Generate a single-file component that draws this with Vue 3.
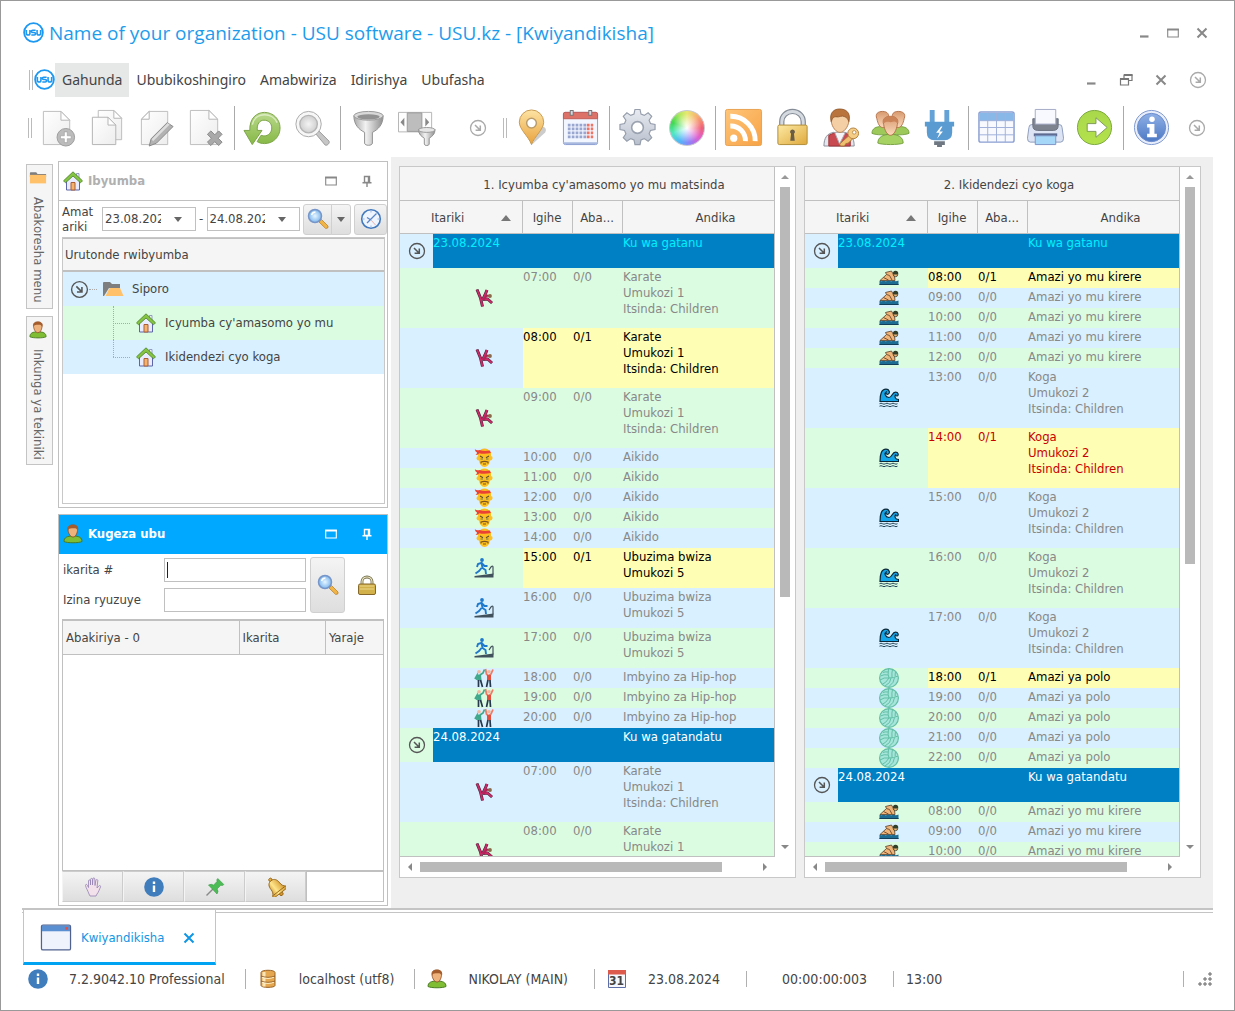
<template>
  <div class="window">
    <!-- shared icon shapes -->
    <svg class="sprite" aria-hidden="true">
      <defs>
        <linearGradient id="gPaper" x1="0" y1="0" x2="1" y2="1">
          <stop offset="0" stop-color="#ffffff" />
          <stop offset="1" stop-color="#ededed" />
        </linearGradient>
        <linearGradient id="gMetal" x1="0" y1="0" x2="1" y2="0">
          <stop offset="0" stop-color="#a8a8a8" />
          <stop offset="0.4" stop-color="#f2f2f2" />
          <stop offset="1" stop-color="#8e8e8e" />
        </linearGradient>
        <linearGradient id="gGreen" x1="0" y1="0" x2="0" y2="1">
          <stop offset="0" stop-color="#b9d98c" />
          <stop offset="1" stop-color="#86b845" />
        </linearGradient>
        <linearGradient id="gLime" x1="0" y1="0" x2="0" y2="1">
          <stop offset="0" stop-color="#a9d84c" />
          <stop offset="1" stop-color="#b4e24c" />
        </linearGradient>
        <linearGradient id="gPin" x1="0" y1="0" x2="0" y2="1">
          <stop offset="0" stop-color="#fde3a4" />
          <stop offset="1" stop-color="#e9a23c" />
        </linearGradient>
        <linearGradient id="gGold" x1="0" y1="0" x2="1" y2="1">
          <stop offset="0" stop-color="#fdeaa4" />
          <stop offset="1" stop-color="#dfa93c" />
        </linearGradient>
        <linearGradient id="gSteel" x1="0" y1="0" x2="0" y2="1">
          <stop offset="0" stop-color="#e8ebf1" />
          <stop offset="1" stop-color="#b9c0cd" />
        </linearGradient>
        <linearGradient id="gOrange" x1="0" y1="0" x2="1" y2="1">
          <stop offset="0" stop-color="#ffc57a" />
          <stop offset="1" stop-color="#f7a244" />
        </linearGradient>
        <linearGradient id="gBlue" x1="0" y1="0" x2="0" y2="1">
          <stop offset="0" stop-color="#8fb0e6" />
          <stop offset="1" stop-color="#4d79c4" />
        </linearGradient>
        <linearGradient id="gHead" x1="0" y1="0" x2="0" y2="1">
          <stop offset="0" stop-color="#d89a6e" />
          <stop offset="1" stop-color="#fbd9bb" />
        </linearGradient>
        <linearGradient id="gBell" x1="0" y1="0" x2="1" y2="0">
          <stop offset="0" stop-color="#c98a1e" />
          <stop offset="0.4" stop-color="#ffe68c" />
          <stop offset="1" stop-color="#d08f22" />
        </linearGradient>
        <radialGradient id="gLens">
          <stop offset="0" stop-color="#f4f4f4" />
          <stop offset="1" stop-color="#cfcfcf" />
        </radialGradient>
        <radialGradient id="gLensBlue">
          <stop offset="0" stop-color="#e6f5ff" />
          <stop offset="1" stop-color="#7db8ee" />
        </radialGradient>
      </defs>

      <symbol id="usu" viewBox="0 0 20 20">
        <circle cx="10" cy="10" r="8.9" fill="#fff" stroke="#1c98f3" stroke-width="1.8" />
        <path d="M3.2 7.600v3q0 1.800 1.700 1.800t1.700-1.800v-3M12 7.800H9.200q-1.200 0-1.200 1.100t1.200 1.100h1.500q1.200 0 1.200 1.200t-1.200 1.200H7.900M13.400 7.600v3q0 1.800 1.700 1.800t1.700-1.800v-3" fill="none" stroke="#1c98f3" stroke-width="1.5" />
      </symbol>
      <symbol id="more" viewBox="0 0 18 18">
        <circle cx="9" cy="9" r="7.5" fill="none" stroke="currentColor" stroke-width="1.3" />
        <path d="M6 6l5 5M11.300 6.600v4.700H6.600" fill="none" stroke="currentColor" stroke-width="1.5" />
      </symbol>
      <symbol id="minimize" viewBox="0 0 14 14"><path d="M3 10.500h8.500" stroke="#888" stroke-width="2.2" /></symbol>
      <symbol id="maximize" viewBox="0 0 14 14">
        <path d="M1.700 3.500h10.600v7.500H1.700z" fill="none" stroke="currentColor" stroke-width="1.100" />
        <path d="M1.100 3.500h11.800" stroke="currentColor" stroke-width="2" />
      </symbol>
      <symbol id="restore" viewBox="0 0 14 14">
        <path d="M5 5V2h8v5.500H9.500M1.500 6h8v6h-8z" fill="none" stroke="#777" stroke-width="1.200" />
        <path d="M5 2h8.500M1 6h9" stroke="#777" stroke-width="2" />
      </symbol>
      <symbol id="close" viewBox="0 0 14 14"><path d="M2.500 2.500l9 9M11.500 2.500l-9 9" stroke="currentColor" stroke-width="2" /></symbol>
      <symbol id="pin" viewBox="0 0 14 14"><path d="M4.500 2.500h5v6h-5zM2.500 8.700h9M7 9v4M8.500 2.500v6" fill="none" stroke="currentColor" stroke-width="1.400" /></symbol>

      <symbol id="docNew" viewBox="0 0 40 40">
        <path d="M4.500 3.500h18l9 9v25h-27z" fill="url(#gPaper)" stroke="#bdbdbd" />
        <path d="M22.500 3.500v9h9z" fill="#fff" stroke="#b5b5b5" />
        <circle cx="27.500" cy="30" r="9" fill="#bcbcbc" stroke="#9d9d9d" />
        <path d="M26 24.500h3v4h4v3h-4v4h-3v-4h-4v-3h4z" fill="#fff" stroke="#999" stroke-width=".6" />
      </symbol>
      <symbol id="docCopy" viewBox="0 0 40 40">
        <path d="M10.500 2.500h16l8 8v22h-24z" fill="url(#gPaper)" stroke="#bdbdbd" />
        <path d="M26.500 2.500v8h8z" fill="#fff" stroke="#b5b5b5" />
        <path d="M4.500 9.500h16l8 8v20h-24z" fill="url(#gPaper)" stroke="#b3b3b3" />
        <path d="M20.500 9.500v8h8z" fill="#fff" stroke="#b5b5b5" />
      </symbol>
      <symbol id="docEdit" viewBox="0 0 40 40">
        <path d="M12.500 3.500h19v34h-27v-26z" fill="url(#gPaper)" stroke="#bdbdbd" />
        <path d="M12.500 3.500v8h-8z" fill="#fff" stroke="#b0b0b0" />
        <path d="M31 15l6 4-17 17-7.500 3 2-7.500z" fill="#b2b2b2" stroke="#888" />
        <path d="M15 32L31.500 15.500l2 1.500-17 17z" fill="#ddd" />
      </symbol>
      <symbol id="docDelete" viewBox="0 0 40 40">
        <path d="M4.500 2.500h19l9 9v26h-28z" fill="url(#gPaper)" stroke="#bdbdbd" />
        <path d="M23.500 2.500v9h9z" fill="#fff" stroke="#b5b5b5" />
        <path d="M22 27l3.500-3.500 4 4 4-4 3.500 3.500-4 4 4 4-3.500 3.500-4-4-4 4-3.500-3.500 4-4z" fill="#a9a9a9" stroke="#888" />
      </symbol>
      <symbol id="refresh" viewBox="0 0 40 40">
        <path d="M7 23C6.500 10 14.500 4.500 22 4.500c9 0 16 7 16 16s-7 16-16 16c-3 0-5.500-.8-7.500-2l4-6.500c6 2.400 11-2 11-7.500 0-5-3.500-8-8-8-4.500 0-7.500 4-6.800 10.500h4.800L9.500 37.500 1 23z" fill="url(#gGreen)" stroke="#7ba347" />
        <path d="M9.500 17c1.500-7 7-10 12.500-10 6 0 11 3.500 13 8" fill="none" stroke="#dcecc2" stroke-width="1.500" />
      </symbol>
      <symbol id="search" viewBox="0 0 40 40">
        <path d="M24 26l3-3 11 11c1 2-2 5-4 4z" fill="#c6c6c6" stroke="#999" />
        <circle cx="17" cy="16.500" r="13" fill="#f7f7f7" stroke="#aaa" />
        <circle cx="17" cy="16.500" r="9" fill="url(#gLens)" stroke="#b4b4b4" stroke-width="1.400" />
      </symbol>
      <symbol id="funnel" viewBox="0 0 40 40">
        <path d="M5 8c0 9 5 14 11 17v11c0 3 8 3 8 0V25c6-3 11-8 11-17z" fill="url(#gMetal)" stroke="#909090" />
        <ellipse cx="20" cy="8" rx="15" ry="4.500" fill="#d9d9d9" stroke="#999" />
        <ellipse cx="20" cy="9" rx="11.500" ry="2.700" fill="#929292" />
      </symbol>
      <symbol id="funnelBar" viewBox="0 0 40 40">
        <path d="M.5 4.500h34v20H.5z" fill="#fdfdfd" stroke="#b5b5b5" />
        <path d="M9.500 5h15v19h-15z" fill="#bdbdbd" stroke="#9a9a9a" />
        <path d="M6.500 10v9l-4-4.500zM28 10v9l4-4.500z" fill="#888" />
        <path d="M21 22c0 5 3 7 6 9v6c0 2 5 2 5 0v-6c3-2 6-4 6-9z" fill="url(#gMetal)" stroke="#909090" />
        <ellipse cx="29.500" cy="22.500" rx="8.500" ry="2.500" fill="#e6e6e6" stroke="#999" />
      </symbol>
      <symbol id="marker" viewBox="0 0 40 40">
        <path d="M20 38L34 25c2-3 0-6-4-6z" fill="#555" opacity="0.3" />
        <path d="M20 37.500C17 29 7.500 22 7.500 14.500a12.500 12.500 0 0 1 25 0C32.500 22 23 29 20 37.500z" fill="url(#gPin)" stroke="#c99a50" />
        <circle cx="20" cy="15.500" r="5" fill="#fff" stroke="#b99c6c" stroke-width="1.500" />
      </symbol>
      <symbol id="calendar" viewBox="0 0 40 40">
        <rect x="2.500" y="4.500" width="35" height="33" rx="2" fill="#f2f6ff" stroke="#889cd0" />
        <path d="M2.500 11V6q0-1.500 1.500-1.500h32q1.500 0 1.500 1.500v5z" fill="#dc7268" stroke="#c05c56" />
        <path d="M3 36h34" stroke="#a9b8de" stroke-width="2" />
        <path d="M7 17.500h19M7 21.500h19M7 25.500h19M7 29.500h19" stroke="#99a6cf" stroke-width="2.800" stroke-dasharray="2.800 1.200" />
        <path d="M26.500 17.500h6.500M26.500 21.500h6.500M26.500 25.500h6.500M26.500 29.500h6.500" stroke="#ef7464" stroke-width="2.800" stroke-dasharray="2.800 1.200" />
        <path d="M11 2v6M30 2v6" stroke="#777" stroke-width="4" />
        <path d="M11 3v4M30 3v4" stroke="#d8d8e0" stroke-width="2" />
      </symbol>
      <symbol id="gear" viewBox="0 0 40 40">
        <path d="M17.400 1.500h5.200l1 4.700 3.300 1.400 4-2.700 3.700 3.700-2.700 4 1.400 3.300 4.700 1v5.200l-4.700 1-1.400 3.300 2.700 4-3.700 3.700-4-2.700-3.300 1.400-1 4.700h-5.200l-1-4.700-3.300-1.400-4 2.700-3.700-3.700 2.700-4-1.400-3.300-4.700-1v-5.200l4.700-1 1.400-3.300-2.700-4 3.700-3.700 4 2.700 3.300-1.400z" fill="url(#gSteel)" stroke="#969eac" stroke-width="1.200" />
        <circle cx="20" cy="20" r="6" fill="#fff" stroke="#9aa2b0" stroke-width="1.600" />
      </symbol>
      <symbol id="rss" viewBox="0 0 40 40">
        <rect x="1.500" y="1.500" width="37" height="37" rx="2" fill="url(#gOrange)" stroke="#e8a050" />
        <circle cx="10" cy="31" r="3.700" fill="#fff" />
        <path d="M6.500 18.500A15 15 0 0 1 22 34M6.500 8.500A25 25 0 0 1 32 34" fill="none" stroke="#fff" stroke-width="5" />
      </symbol>
      <symbol id="lock" viewBox="0 0 40 40">
        <path d="M9 19v-5a11 10.500 0 0 1 22 0v5" fill="none" stroke="#858c96" stroke-width="5.500" />
        <path d="M9 19v-5a11 10.500 0 0 1 22 0v5" fill="none" stroke="#d5dae0" stroke-width="3" />
        <rect x="5" y="17.500" width="30" height="20" rx="1.500" fill="url(#gGold)" stroke="#b08c3a" />
        <path d="M20 22a2.500 2.500 0 0 1 1.500 4.500l.8 7h-4.600l.8-7A2.500 2.500 0 0 1 20 22z" fill="#6a5d46" />
      </symbol>
      <symbol id="userKey" viewBox="0 0 40 40">
        <path d="M2 39c0-8 3-13 10-14l6 5 5-5c7 1 10 6 10 14z" fill="#e4e7ee" stroke="#8a8f9a" />
        <path d="M7 39V28l7-3 4 6 5-6 6 4v10z" fill="#c94a50" stroke="#9e3438" />
        <path d="M13 25l5 12 6-12z" fill="#f5f5f8" stroke="#a9a9b0" />
        <path d="M9.500 14C8 5 13 1.500 18 1.500S29 4 27.500 14c-1 6-5 11-9 11s-8-5-9-11z" fill="#f4cfa5" stroke="#b88352" />
        <path d="M9.500 14C7 4 13 1 18 1c6 0 12 3 9.500 13-1-3-2-4-4-5-4-2-5 1-10 0-2 0-3 2-4 5z" fill="#b9733c" stroke="#8e5529" stroke-width=".8" />
        <path d="M28 28L18 37l1 2h4l1.500-2.500 2.500-.5 5-5" fill="#f0c070" stroke="#a9783a" />
        <circle cx="32" cy="26" r="5.500" fill="#f6cd84" stroke="#b0803e" />
        <circle cx="33" cy="25" r="1.800" fill="#fff" stroke="#b0803e" stroke-width=".8" />
      </symbol>
      <symbol id="users" viewBox="0 0 40 40">
        <g stroke-width=".9">
          <path d="M1 26c0-5 4-7 10-7s10 2 10 7c-4 2-16 2-20 0z" fill="#9cc95a" stroke="#6f9a38" />
          <path d="M19 26c0-5 4-7 10-7s10 2 10 7c-4 2-16 2-20 0z" fill="#9cc95a" stroke="#6f9a38" />
          <path d="M6 11c-2-5 1-7.500 6-7.500s7 3 6 8c-1 5-3 8.500-6 8.500s-5-4-6-9z" fill="url(#gHead)" stroke="#b06c42" />
          <path d="M22 11c-1-5 1-7.500 6-7.500s8 2.500 6 7.500c-1 5-3 9-6 9s-5-4-6-9z" fill="url(#gHead)" stroke="#b06c42" />
          <path d="M7 36c0-6 5-9 13-9s13 3 13 9c-4 2-22 2-26 0z" fill="#a5d263" stroke="#6f9a38" />
          <path d="M13 17c-2-6 2-8.500 7-8.500s9 2.500 7 8.500c-1 6-3.500 11-7 11s-6-5-7-11z" fill="url(#gHead)" stroke="#b06c42" />
          <path d="M13 16c-2-5 2-7.500 7-7.500s9 2.500 7 7.500c-2-3-4-2-7-1.500-3-.5-5-1-7 1.500z" fill="#cb8358" />
        </g>
      </symbol>
      <symbol id="plug" viewBox="0 0 40 40">
        <path d="M10 2h5v13h-5zM25 2h5v13h-5z" fill="#62a2d6" />
        <path d="M5 14h30v5h-2v6q0 8-8 8H15q-8 0-8-8v-6H5z" fill="#5a9bd2" />
        <path d="M21.500 19l-5 6.500h3.500l-2.500 6 6-7.500h-3.500l3-5z" fill="#fff" />
        <path d="M14.500 34h11v4h-3v2h-5v-2h-3z" fill="#6f7882" />
      </symbol>
      <symbol id="grid" viewBox="0 0 40 40">
        <rect x="2" y="4" width="36" height="31" rx="2" fill="#f7f9ff" stroke="#8a9fd2" stroke-width="1.500" />
        <path d="M2.500 5h35v8h-35z" fill="#88b8e8" />
        <path d="M2 13h36M2 20h36M2 27.500h36M11 5v30M20 5v30M29 5v30" stroke="#9fb0da" />
      </symbol>
      <symbol id="printer" viewBox="0 0 40 40">
        <path d="M3 20q0-3 3-3h28q3 0 3 3l1.500 11q0 4-3 4h-31q-3 0-3-4z" fill="#dde4f3" stroke="#8f9dbd" />
        <path d="M7 11h26v7q0 5-5 5H12q-5 0-5-5z" fill="#7d838f" stroke="#6c7280" />
        <path d="M9.500 1.500h21v15h-21z" fill="#f8f9fe" stroke="#a3abc6" />
        <path d="M8 26h24v3H8z" fill="#5f6c92" />
        <path d="M9.500 28.500h21v9h-21z" fill="#a6d6f8" stroke="#7d95c4" />
      </symbol>
      <symbol id="go" viewBox="0 0 40 40">
        <circle cx="20" cy="20" r="17.500" fill="url(#gLime)" stroke="#79a83c" />
        <path d="M12.500 16h9v-6L33 20 21.500 30v-6h-9z" fill="#fff" stroke="#7d9a55" />
      </symbol>
      <symbol id="about" viewBox="0 0 40 40">
        <circle cx="20" cy="20" r="17.500" fill="#e8eefb" stroke="#7d97cf" />
        <circle cx="20" cy="20" r="14.500" fill="url(#gBlue)" stroke="#6c8ccc" />
        <circle cx="20.500" cy="11.500" r="2.800" fill="#fff" />
        <path d="M15.500 16.500h7.500v10h2.500V30h-10v-3.500H18V20h-2.500z" fill="#fff" />
      </symbol>

      <symbol id="home" viewBox="0 0 20 20">
        <path d="M3.500 9v10h13V9L10 3z" fill="#e9ebff" stroke="#5d66a8" />
        <path d="M8 11.500h4v7.500H8z" fill="#f6b26a" stroke="#a85f38" />
        <path d="M13.500 2.500h2.500v5h-2.500z" fill="#f1f1fa" stroke="#8088b5" stroke-width=".8" />
        <path d="M10 .8l9.500 9-2 2L10 5l-7.500 6.800-2-2z" fill="#84c440" stroke="#47802a" stroke-width=".8" />
      </symbol>
      <symbol id="person" viewBox="0 0 20 20">
        <path d="M1 17.500c0-4 3-5.500 9-5.500s9 1.500 9 5.500c-3 1.700-15 1.700-18 0z" fill="#7fbd34" stroke="#4a7c24" />
        <path d="M5 6C4.500 2 7 1 10 1s5.500 1.500 4.500 5.500C14 10 12.500 13 10 13S5.500 10 5 6z" fill="#eeb27c" stroke="#8c4a22" stroke-width=".8" />
        <path d="M5 6.500C4.300 2 7 .8 10 .8s6 1.500 4.500 6c-.8-2.500-2-2.800-4.500-2.500-2 .2-4-.3-5 2.200z" fill="#a55c2c" />
      </symbol>
      <symbol id="folder" viewBox="0 0 20 20"><path d="M1 4.500q0-1 1-1h6l1.500 2H19V9H1z" fill="#7e7e7e" /><path d="M1 6.500h18v9.500H1z" fill="#ffc26a" /></symbol>
      <symbol id="folderOpen" viewBox="0 0 22 20"><path d="M1 4q0-1 1-1h6l2 2h8v4H7l-5 8H1z" fill="#7e7e7e" /><path d="M7.500 9H18l3.500 8H3.500z" fill="#ffc26a" /></symbol>
      <symbol id="lens" viewBox="0 0 22 22">
        <path d="M12 14l2.500-2.500 6.500 6.500q.8 2.500-2.300 2.500z" fill="#f0b447" stroke="#bd842b" stroke-width=".8" />
        <circle cx="8" cy="8" r="6.500" fill="url(#gLensBlue)" stroke="#7795c8" stroke-width="1.500" />
        <path d="M4.500 7q1-3 4-3" fill="none" stroke="#fff" stroke-width="1.400" />
      </symbol>
      <symbol id="clock" viewBox="0 0 22 22">
        <circle cx="11" cy="11" r="9.300" fill="#eef5ff" stroke="#4279bd" stroke-width="1.600" />
        <path d="M7 15L16.500 5.500M7 9.500l4 2.500" fill="none" stroke="#5b86c4" stroke-width="1.300" />
        <path d="M11 12l4.500 5" stroke="#f0b0a8" />
        <path d="M11 2.500v2M11 17.500v2M2.500 11h2M17.500 11h2" stroke="#9ab6dd" />
      </symbol>
      <symbol id="lockSmall" viewBox="0 0 20 20">
        <path d="M5 9V6a5 4.500 0 0 1 10 0v3" fill="none" stroke="#6f6a4a" stroke-width="2.800" />
        <path d="M5 9V6a5 4.500 0 0 1 10 0v3" fill="none" stroke="#eee7c0" stroke-width="1.200" />
        <rect x="1.500" y="8.500" width="17" height="10.500" rx="1.500" fill="#d2b04a" stroke="#86692a" />
        <path d="M3 10.500h14M3 13.500h14" stroke="#ecd78c" />
      </symbol>
      <symbol id="infoFlat" viewBox="0 0 20 20"><circle cx="10" cy="10" r="9.800" fill="#3f7dbd" /><path d="M8.800 4.500h2.400v2.400H8.800zM8.800 8.400h2.400V15H8.800z" fill="#fff" /></symbol>
      <symbol id="hand" viewBox="0 0 20 20">
        <path d="M6 17C5 14 3 11 2.500 8.500c0-1.500 1.500-1.500 2 0l1 2V4c0-1.500 2-1.500 2 0v4V2.500c0-1.500 2-1.500 2 0V8l.3-6c0-1.500 2-1.500 2 0l.2 6.500.8-5c.2-1.400 2-1.200 2 0L14 11l1.800-2c1-1 2.200-.2 1.700 1C16.500 12 15.500 15.500 14 17l-1 2H7z" fill="#f2e0ea" stroke="#9583b4" stroke-width=".8" />
      </symbol>
      <symbol id="tack" viewBox="0 0 20 20">
        <path d="M8 12l-6.500 6.500" stroke="#8a8a8a" stroke-width="1.500" />
        <path d="M3.500 8q3-1.500 5 .2L12 4.500q-.7-2 .8-3l6 6q-1 1.500-3 .8L12 12q2 2 0 5z" fill="#4dbb56" stroke="#3a9a48" stroke-width=".6" />
      </symbol>
      <symbol id="bell" viewBox="0 0 20 20">
        <g transform="rotate(-38 10 10)" stroke="#96691c" stroke-width=".9">
          <circle cx="10" cy="1" r="1.700" fill="#e8b040" />
          <circle cx="10" cy="18.500" r="1.900" fill="#d8952a" />
          <path d="M10 2c4 0 5.500 3 5.500 7 0 3 .8 4.500 3 6.500v2h-17v-2c2.200-2 3-3.500 3-6.500 0-4 1.500-7 5.500-7z" fill="url(#gBell)" />
          <path d="M3 15h14" />
        </g>
      </symbol>
      <symbol id="windowIcon" viewBox="0 0 30 26">
        <rect x="1" y="1" width="28" height="24" rx="1.500" fill="#eef3fc" stroke="#52628e" stroke-width="1.200" />
        <path d="M1.500 1.500h27V7h-27z" fill="#5a8fd2" /><path d="M24 3h2.500v2.500H24z" fill="#ef4a3c" />
      </symbol>
      <symbol id="database" viewBox="0 0 20 20">
        <path d="M3 3.500v13c0 2.500 14 2.500 14 0v-13c0-3-14-3-14 0z" fill="#e5a850" stroke="#9a6428" />
        <path d="M6 3v14.500" stroke="#fbe6ba" stroke-width="3" />
        <path d="M3 7c3 1.800 11 1.800 14 0M3 12c3 1.800 11 1.800 14 0" fill="none" stroke="#93602a" />
        <path d="M4 8.200c3 1.600 9 1.600 12 0M4 13.200c3 1.600 9 1.600 12 0" fill="none" stroke="#fff0c8" />
      </symbol>
      <symbol id="day" viewBox="0 0 20 20">
        <path d="M1.500 1.500h17v17h-17z" fill="#f6f8fe" stroke="#5b6ea8" /><path d="M1 1h18v4.500H1z" fill="#dc5b4c" />
      </symbol>

      <symbol id="karate" viewBox="0 0 20 20">
        <path d="M3 1.500l3.500 8.500 2 8.500M13 2l-2 5-2.500 5M9 11.500l4.500-.500 4.500 4" fill="none" stroke="#43273c" stroke-width="3" />
        <path d="M3 1.500l3.500 8.500 2 8.500M13 2l-2 5-2.500 5M9 11.500l4.500-.500 4.500 4" fill="none" stroke="#cf2868" stroke-width="1.900" />
        <path d="M9 12l4-4.500 2.500.5" fill="none" stroke="#b02458" stroke-width="2" />
        <circle cx="16" cy="8" r="1.900" fill="#8a6a48" />
      </symbol>
      <symbol id="aikido" viewBox="0 0 20 20">
        <path d="M5.500 3.500Q6.500 .5 10.500 .5T15.500 3.500z" fill="#f8bb20" />
        <path d="M4 4h13v4q2 .3 1.500 2.500t-2.500 2q-1 6.500-5.500 6.500t-5.500-6.500q-2.500 0-2.500-2T4 8z" fill="#fcc020" />
        <path d="M.8 1.200q2 1.500 4.700.8Q10 3.500 16 2.500l.8 2.500q-6 1.500-11.500.300Q4 7.500 1.500 7q1.500-1 1.500-2.500Q1 3.500 .8 1.200z" fill="#ea4335" />
        <path d="M6 8l3 1.700M15 8l-3 1.700" stroke="#5f5030" stroke-width="1.100" />
        <path d="M6.500 11h2.500M12 11h2.500" stroke="#6d7a58" stroke-width="1.100" />
        <path d="M7 15.500v-1.500q3.500-1.300 7 0v1.500M9 16h3" fill="none" stroke="#7b5522" stroke-width="1.100" />
      </symbol>
      <symbol id="treadmill" viewBox="0 0 20 20">
        <circle cx="8" cy="2" r="1.900" fill="#1e78cc" />
        <path d="M7.500 4.500l1 5.500 3 2 .5 4M7.500 10L5 13l-3.500 2.500M3 9l1-3 3.500-1.200L10.500 8h3" fill="none" stroke="#1e78cc" stroke-width="1.900" />
        <path d="M.5 19.500V18L19.500 15.500v4z" fill="#41515c" />
        <path d="M19 16.500V9q0-2-2 0l-2 3" fill="none" stroke="#41515c" stroke-width="1.200" />
      </symbol>
      <symbol id="dance" viewBox="0 0 20 20">
        <path d="M6 7l3-2 1.500-3.500M3 12V7.500L1 11" fill="none" stroke="#42a88c" stroke-width="1.800" />
        <path d="M3 6.500h4l.5 6H3.500z" fill="#42a88c" />
        <circle cx="5" cy="3.800" r="1.800" fill="#f3b8a0" />
        <path d="M11.500 1l1 5 2 2 2.500-2L19 1.500" fill="none" stroke="#ef7b66" stroke-width="1.800" />
        <path d="M13 7h4v5.500h-4z" fill="#e3503e" />
        <circle cx="15" cy="3.800" r="1.800" fill="#f3b8a0" />
        <path d="M4.500 12v7M6.500 12l2 7M14 12l-1.500 7M16 12l.5 7" stroke="#26394c" stroke-width="1.700" />
      </symbol>
      <symbol id="swim" viewBox="0 0 20 20">
        <path d="M1 12.500L7.500 6.500 6.500 4.500l6-1.500 3 5.500.5 4z" fill="#efb477" stroke="#573d2a" stroke-width=".8" />
        <path d="M7.500 6.500l3 1 2.500 4.500M4.500 9.500l5 2.500" fill="none" stroke="#6b4a30" stroke-width=".9" />
        <circle cx="16.500" cy="6.500" r="2.200" fill="#efb477" stroke="#33402a" stroke-width=".8" />
        <path d="M14 6q-.5-3 2.500-3.300 3.200.3 2.700 3.300-2.500 1-5.200 0z" fill="#33402a" />
        <path d="M.5 12.500q2 1.500 4 0 2 1.500 5 0 3 1.500 5 0 2 1.500 5 0V17H.5z" fill="#1d6c94" />
        <path d="M.5 16.500h19" stroke="#123f5c" />
      </symbol>
      <symbol id="wave" viewBox="0 0 20 20">
        <path d="M1 13.500C1 6 2.500 1.200 7 1.200c3.500 0 4.300 3.800 2.300 4.800-1.500.8-2.800-.5-2.300-1.800-2 1.300-.5 5.300 3 5.300 3 0 3-5.300 6.500-5.300 3 0 3.500 3.600 1.500 3.800-1 0-1.500-.8-1-1.500-1.500 1-1.300 3.500.5 4.500l2 .5v2z" fill="#13a5e8" stroke="#0b2838" stroke-width="1.200" />
        <path d="M.5 15.700q1.500-1 3 0t3 0 3 0 3 0 3 0 3 0M.5 18.200q1.500-1 3 0t3 0 3 0 3 0 3 0 3 0" fill="none" stroke="#24485a" />
      </symbol>
      <symbol id="ball" viewBox="0 0 20 20">
        <circle cx="10" cy="10" r="9.400" fill="#a6e5da" stroke="#62bfa6" stroke-width="1.200" />
        <path d="M9.500 1q-1 6 .500 9 4.500 0 9-2M13.500 1.500q-1 3.500-.5 7.500M16.500 4q-.5 2-.3 4M10 10q-3 5-7 6.500M12 10q0 5-6 8M15.500 9.500q0 5-6 9.500M10 10Q5 9 1 12M9 7Q5 6 1.500 8M9 4Q6 3.500 4 4.500" fill="none" stroke="#62bfa6" />
      </symbol>
    </svg>

    <header class="title-bar">
      <svg class="logo"><use href="#usu" /></svg>
      <h1 class="title">Name of your organization - USU software - USU.kz - [Kwiyandikisha]</h1>
      <div class="window-buttons">
        <button v-for="name in ['minimize', 'maximize', 'close']" :key="name" :aria-label="name">
          <svg><use :href="'#' + name" /></svg>
        </button>
      </div>
    </header>

    <nav class="menu-bar">
      <span class="grip"></span>
      <svg class="logo"><use href="#usu" /></svg>
      <button
        v-for="item in menu"
        :key="item"
        class="menu-item"
        :class="{ active: item === activeMenu }"
        @click="activeMenu = item"
      >{{ item }}</button>
      <div class="window-buttons child">
        <button v-for="name in ['minimize', 'restore', 'close']" :key="name" :aria-label="name">
          <svg><use :href="'#' + name" /></svg>
        </button>
        <button class="more" aria-label="more"><svg><use href="#more" /></svg></button>
      </div>
    </nav>

    <div class="toolbar">
      <span class="grip"></span>
      <template v-for="(group, g) in mainTools" :key="'m' + g">
        <span v-if="g" class="tool-separator"></span>
        <button v-for="icon in group" :key="icon" class="tool" :aria-label="icon">
          <svg><use :href="'#' + icon" /></svg>
        </button>
      </template>
      <button class="more first" aria-label="more"><svg><use href="#more" /></svg></button>
      <span class="grip"></span>
      <template v-for="(group, g) in extraTools" :key="'e' + g">
        <span v-if="g" class="tool-separator"></span>
        <button v-for="icon in group" :key="icon" class="tool" :aria-label="icon">
          <span v-if="icon === 'palette'" class="palette"></span>
          <svg v-else><use :href="'#' + icon" /></svg>
        </button>
      </template>
      <button class="more last" aria-label="more"><svg><use href="#more" /></svg></button>
    </div>

    <main class="main">
      <aside class="side-tabs">
        <button class="side-tab"><svg><use href="#folder" /></svg><span>Abakoresha menu</span></button>
        <button class="side-tab"><svg><use href="#person" /></svg><span>Inkunga ya tekiniki</span></button>
      </aside>

      <div class="docks">
        <section class="dock rooms">
          <div class="dock-header">
            <svg class="dock-icon"><use href="#home" /></svg>
            <h2>Ibyumba</h2>
            <button aria-label="maximize"><svg><use href="#maximize" /></svg></button>
            <button aria-label="pin"><svg><use href="#pin" /></svg></button>
          </div>
          <div class="range">
            <label for="date-from">Amat<br>ariki</label>
            <div class="date-box">
              <input id="date-from" v-model="dateFrom" type="text">
              <button aria-label="open"><i class="caret"></i></button>
            </div>
            <span class="dash">-</span>
            <div class="date-box">
              <input v-model="dateTo" type="text" aria-label="date to">
              <button aria-label="open"><i class="caret"></i></button>
            </div>
            <button class="soft find" aria-label="find"><svg><use href="#lens" /></svg></button>
            <button class="soft drop" aria-label="options"><i class="caret"></i></button>
            <button class="soft now" aria-label="now"><svg><use href="#clock" /></svg></button>
          </div>
          <div class="tree">
            <div class="tree-header">Urutonde rwibyumba</div>
            <div class="tree-row root">
              <svg class="expander"><use href="#more" /></svg>
              <span class="stub"></span>
              <svg class="tree-folder"><use href="#folderOpen" /></svg>
              <span>Siporo</span>
            </div>
            <div v-for="(room, i) in rooms" :key="room" class="tree-row leaf" :class="{ last: i === rooms.length - 1 }">
              <span class="branch"></span>
              <svg class="tree-home"><use href="#home" /></svg>
              <span>{{ room }}</span>
            </div>
          </div>
        </section>

        <section class="dock current">
          <div class="dock-header">
            <svg class="dock-icon"><use href="#person" /></svg>
            <h2>Kugeza ubu</h2>
            <button aria-label="maximize"><svg><use href="#maximize" /></svg></button>
            <button aria-label="pin"><svg><use href="#pin" /></svg></button>
          </div>
          <form class="lookup" @submit.prevent>
            <label for="card">ikarita #</label>
            <div class="card-box"><i class="cursor"></i><input id="card" type="text"></div>
            <button class="soft lookup-button" aria-label="find"><svg><use href="#lens" /></svg></button>
            <button class="lookup-lock" aria-label="lock"><svg><use href="#lockSmall" /></svg></button>
            <label for="full-name">Izina ryuzuye</label>
            <input id="full-name" type="text">
          </form>
          <div class="clients">
            <table>
              <thead>
                <tr><th class="c-name">Abakiriya - 0</th><th class="c-card">Ikarita</th><th>Yaraje</th></tr>
              </thead>
            </table>
          </div>
          <div class="actions">
            <button v-for="icon in ['hand', 'infoFlat', 'tack', 'bell']" :key="icon" class="soft" :aria-label="icon">
              <svg><use :href="'#' + icon" /></svg>
            </button>
            <span class="actions-rest"></span>
          </div>
        </section>
      </div>

      <div class="workspace">
        <section v-for="hall in halls" :key="hall.title" class="hall">
          <div class="hall-view">
            <table>
              <colgroup>
                <col class="w-toggle"><col class="w-date"><col class="w-cell"><col class="w-cell"><col>
              </colgroup>
              <thead>
                <tr><th colspan="5">{{ hall.title }}</th></tr>
                <tr>
                  <th colspan="2"><div class="sorted"><span>Itariki</span><i class="sort-mark"></i></div></th>
                  <th>Igihe</th>
                  <th>Aba...</th>
                  <th>Andika</th>
                </tr>
              </thead>
              <tbody>
                <tr
                  v-for="(row, i) in hall.rows"
                  :key="i"
                  :class="[i % 2 ? 'green' : 'blue', row.date ? 'group' : 'lines-' + row.text.length, row.state]"
                >
                  <template v-if="row.date">
                    <td class="toggle"><svg><use href="#more" /></svg></td>
                    <td class="fill" colspan="3">{{ row.date }}</td>
                    <td class="fill">{{ row.day }}</td>
                  </template>
                  <template v-else>
                    <td></td>
                    <td class="sport"><svg><use :href="'#' + row.icon" /></svg></td>
                    <td class="mark">{{ row.time }}</td>
                    <td class="mark">{{ row.state ? '0/1' : '0/0' }}</td>
                    <td class="mark"><div v-for="line in row.text" :key="line">{{ line }}</div></td>
                  </template>
                </tr>
              </tbody>
            </table>
          </div>
          <div class="scroll vertical">
            <i class="arrow up"></i>
            <div class="track"><div class="thumb" :style="{ height: hall.scroll + '%' }"></div></div>
            <i class="arrow down"></i>
          </div>
          <div class="scroll horizontal">
            <i class="arrow left"></i>
            <div class="track"><div class="thumb"></div></div>
            <i class="arrow right"></i>
          </div>
        </section>
      </div>
    </main>

    <div class="tab-strip">
      <div class="page-tab">
        <svg class="page-icon"><use href="#windowIcon" /></svg>
        <span>Kwiyandikisha</span>
        <button aria-label="close tab"><svg><use href="#close" /></svg></button>
      </div>
    </div>

    <footer class="status-bar">
      <span class="status version"><svg><use href="#infoFlat" /></svg>7.2.9042.10 Professional</span>
      <span class="status host"><svg><use href="#database" /></svg>localhost (utf8)</span>
      <span class="status user"><svg><use href="#person" /></svg>NIKOLAY (MAIN)</span>
      <span class="status date"><span class="day"><svg><use href="#day" /></svg><b>31</b></span>23.08.2024</span>
      <span class="status timer">00:00:00:003</span>
      <span class="status time">13:00</span>
      <svg class="resize" viewBox="0 0 14 14">
        <path d="M12 0v4M10 2h4M7 5v4M5 7h4M12 5v4M10 7h4M2 10v4M0 12h4M7 10v4M5 12h4M12 10v4M10 12h4" stroke="#666" />
      </svg>
    </footer>
  </div>
</template>

<script setup>
import { ref } from 'vue'

const menu = ['Gahunda', 'Ububikoshingiro', 'Amabwiriza', 'Idirishya', 'Ubufasha']
const activeMenu = ref('Gahunda')

const mainTools = [
  ['docNew', 'docCopy', 'docEdit', 'docDelete'],
  ['refresh', 'search'],
  ['funnel', 'funnelBar'],
]
const extraTools = [
  ['marker', 'calendar'],
  ['gear', 'palette'],
  ['rss', 'lock', 'userKey', 'users', 'plug'],
  ['grid', 'printer', 'go'],
  ['about'],
]

const dateFrom = ref('23.08.2024')
const dateTo = ref('24.08.2024')
const rooms = ["Icyumba cy'amasomo yo mu", 'Ikidendezi cyo koga']

// one row per hour from `from` to `to`; `states` marks the booked hours
const hours = (from, to, icon, text, states = {}) => {
  const rows = []
  for (let h = from; h <= to; h++) {
    rows.push({ time: String(h).padStart(2, '0') + ':00', icon, text, state: states[h] || '' })
  }
  return rows
}

const karate = ['Karate', 'Umukozi 1', 'Itsinda: Children']
const koga = ['Koga', 'Umukozi 2', 'Itsinda: Children']

const halls = [
  {
    title: "1. Icyumba cy'amasomo yo mu matsinda",
    scroll: 63,
    rows: [
      { date: '23.08.2024', day: 'Ku wa gatanu', state: 'today' },
      ...hours(7, 9, 'karate', karate, { 8: 'booked' }),
      ...hours(10, 14, 'aikido', ['Aikido']),
      ...hours(15, 17, 'treadmill', ['Ubuzima bwiza', 'Umukozi 5'], { 15: 'booked' }),
      ...hours(18, 20, 'dance', ['Imbyino za Hip-hop']),
      { date: '24.08.2024', day: 'Ku wa gatandatu' },
      ...hours(7, 8, 'karate', karate),
    ],
  },
  {
    title: '2. Ikidendezi cyo koga',
    scroll: 58,
    rows: [
      { date: '23.08.2024', day: 'Ku wa gatanu', state: 'today' },
      ...hours(8, 12, 'swim', ['Amazi yo mu kirere'], { 8: 'booked' }),
      ...hours(13, 17, 'wave', koga, { 14: 'booked late' }),
      ...hours(18, 22, 'ball', ['Amazi ya polo'], { 18: 'booked' }),
      { date: '24.08.2024', day: 'Ku wa gatandatu' },
      ...hours(8, 10, 'swim', ['Amazi yo mu kirere']),
    ],
  },
]
</script>

<style>
body {
  margin: 0;
}
</style>

<style scoped>
* {
  box-sizing: border-box;
}

.window {
  display: flex;
  flex-direction: column;
  height: 100vh;
  border: 1px solid #999;
  background: #fff;
  color: #444;
  font-family: 'DejaVu Sans Condensed', 'DejaVu Sans', sans-serif;
  font-size: 13px;
  line-height: 16px;
  overflow: hidden;
}

.sprite {
  position: absolute;
  width: 0;
  height: 0;
}

svg {
  display: block;
  flex: none;
}

button {
  padding: 0;
  border: 0;
  background: none;
  color: inherit;
  font: inherit;
  cursor: pointer;
}

input {
  min-width: 0;
  margin: 0;
  border: 1px solid #c0c0c0;
  background: #fff;
  color: inherit;
  font: inherit;
  outline: none;
}

/* title and menu */
.title-bar {
  display: flex;
  align-items: center;
  height: 63px;
  padding: 0 25px 0 22px;
}

.logo {
  width: 21px;
  height: 21px;
}

.title {
  flex: 1;
  margin: 0 0 0 5px;
  color: #1e9cec;
  font-family: 'Open Sans', 'Noto Sans', sans-serif;
  font-size: 19px;
  font-weight: 400;
  line-height: 26px;
  white-space: nowrap;
}

.window-buttons {
  display: flex;
  align-items: center;
  gap: 15px;
  color: #888;
}

.window-buttons svg {
  width: 14px;
  height: 14px;
}

.menu-bar {
  display: flex;
  align-items: center;
  height: 31px;
  padding: 0 27px 0 28px;
  font-family: 'Noto Sans', 'Open Sans', sans-serif;
  font-size: 14px;
}

.grip {
  flex: none;
  width: 4px;
  height: 20px;
  border: 1px solid #bbb;
  border-width: 0 1px;
}

.menu-bar .logo {
  margin-left: 1px;
}

.menu-item {
  height: 34px;
  padding: 0 7px;
}

.menu-item.active {
  background: #e6e8e7;
}

.child {
  gap: 21px;
  margin-left: auto;
}

.more {
  color: #aaa;
}

.more svg,
.window-buttons .more svg {
  width: 18px;
  height: 18px;
}

/* toolbar */
.toolbar {
  display: flex;
  align-items: center;
  height: 62px;
  padding: 3px 28px 0 27px;
}

.tool {
  display: flex;
  justify-content: center;
  width: 49px;
}

.tool svg {
  width: 39px;
  height: 39px;
}

.toolbar .grip:first-child {
  margin-right: 2px;
}

.tool-separator {
  width: 8px;
  height: 44px;
  background: linear-gradient(#aaa, #aaa) 50% 50% / 1px 100% no-repeat;
}

.more.first {
  margin: 0 24px 0 27px;
}

.more.first + .grip {
  margin-left: -8px;
}

.more.last {
  margin-left: auto;
}

.palette {
  width: 36px;
  height: 36px;
  border: 1px solid #c8c8d0;
  border-radius: 50%;
  background:
    radial-gradient(circle, #fff 0, rgba(255, 255, 255, 0.6) 25%, rgba(255, 255, 255, 0) 60%),
    conic-gradient(#e8e870, #f8b070 40deg, #f06078 90deg, #e060d0 130deg, #9080f8 170deg, #50b8f8 210deg, #50e8c0 250deg, #40d850 290deg, #b0e860 330deg, #e8e870);
}

/* main area */
.main {
  display: flex;
  flex: 1;
  min-height: 0;
  padding: 0 21px 0 25px;
}

.side-tabs {
  display: flex;
  flex-direction: column;
  gap: 7px;
  width: 27px;
  margin-top: 7px;
}

.side-tab {
  display: flex;
  flex-direction: column;
  align-items: center;
  gap: 10px;
  padding: 4px 4px 5px 0;
  border: 1px solid #c4c4c4;
  background: #f5f5f5;
}

.side-tab svg {
  width: 20px;
  height: 18px;
}

.side-tab span {
  writing-mode: vertical-rl;
  color: #666;
  white-space: nowrap;
}

.docks {
  display: flex;
  flex-direction: column;
  gap: 6px;
  width: 330px;
  margin: 4px 3px 2px 5px;
}

.dock {
  display: flex;
  flex-direction: column;
  padding: 0 3px 3px;
  border: 1px solid #c0c0c0;
}

.rooms {
  flex: 347;
}

.current {
  flex: 392;
}

.dock-header {
  display: flex;
  align-items: center;
  height: 39px;
  margin: 0 -3px;
  padding: 0 13px 0 4px;
  border-bottom: 1px solid #c0c0c0;
  color: #888;
}

.dock-header h2 {
  flex: 1;
  margin: 0 0 0 5px;
  color: #b0b0b0;
  font-size: 13px;
  font-weight: 700;
}

.dock-header svg {
  width: 14px;
  height: 14px;
}

.dock-header .dock-icon {
  width: 20px;
  height: 20px;
}

.dock-header button + button {
  margin-left: 22px;
}

.current .dock-header {
  border-color: #00a8ff;
  background: #00a8ff;
  color: #fff;
}

.current .dock-header h2 {
  color: #fff;
}

.range {
  display: flex;
  align-items: center;
  height: 36px;
}

.range label {
  width: 40px;
  line-height: 15px;
}

.date-box {
  display: flex;
  flex: 1;
  min-width: 0;
  height: 24px;
  border: 1px solid #c0c0c0;
}

.date-box input {
  flex: 1;
  padding: 0 0 0 2px;
  border: 0;
}

.date-box button {
  width: 34px;
}

.caret {
  display: inline-block;
  border: 4px solid transparent;
  border-top: 5px solid #666;
  border-bottom: 0;
  vertical-align: middle;
}

.dash {
  width: 11px;
  text-align: center;
}

.soft {
  display: flex;
  align-items: center;
  justify-content: center;
  border: 1px solid #d0d0d0;
  background: linear-gradient(#f4f4f4, #dedede);
}

.soft svg {
  width: 22px;
  height: 22px;
}

.find,
.drop,
.now {
  height: 31px;
  border-radius: 3px;
}

.find {
  width: 29px;
  margin-left: 3px;
  border-radius: 3px 0 0 3px;
}

.drop {
  width: 20px;
  margin-left: -1px;
  border-radius: 0 3px 3px 0;
}

.now {
  width: 33px;
  margin: 0 -3px 0 3px;
}

.tree {
  flex: 1;
  margin-right: -1px;
  border: 1px solid #c8c8c8;
}

.tree-header {
  height: 34px;
  padding: 0 2px;
  border: 1px solid #c0c0c0;
  border-width: 1px 0 2px;
  background: #f5f5f5;
  line-height: 32px;
}

.tree-row {
  display: flex;
  align-items: center;
  height: 34px;
  background: #d8f0ff;
}

.tree-row.root {
  padding-left: 7px;
}

.expander {
  width: 19px;
  height: 19px;
  color: #555;
}

.stub {
  width: 8px;
  margin-right: 5px;
  border-top: 1px dotted #aaa;
}

.tree-folder {
  width: 22px;
  height: 20px;
  margin-right: 8px;
}

.leaf {
  padding-left: 50px;
}

.leaf:nth-child(odd) {
  background: #dcfce2;
}

.branch {
  position: relative;
  align-self: stretch;
  width: 23px;
}

.branch::before,
.branch::after {
  content: '';
  position: absolute;
  top: 0;
  left: 0;
}

.branch::before {
  bottom: 0;
  border-left: 1px dotted #aaa;
}

.branch::after {
  top: 50%;
  width: 17px;
  border-top: 1px dotted #aaa;
}

.leaf.last .branch::before {
  bottom: 50%;
}

.tree-home {
  width: 20px;
  height: 20px;
  margin-right: 9px;
}

/* lookup panel */
.lookup {
  display: grid;
  grid-template-columns: 97px 1fr 35px 35px;
  grid-template-rows: 24px 24px;
  column-gap: 4px;
  row-gap: 6px;
  align-items: center;
  padding: 4px 0 7px 1px;
}

.lookup input {
  height: 24px;
  width: 100%;
}

.card-box {
  position: relative;
}

.cursor {
  position: absolute;
  top: 4px;
  left: 3px;
  width: 1px;
  height: 16px;
  background: #222;
}

.lookup-button {
  grid-column: 3;
  grid-row: 1 / 3;
  height: 56px;
  border-radius: 3px;
}

.lookup-lock {
  grid-column: 4;
  grid-row: 1 / 3;
  justify-self: center;
}

.lookup-lock svg {
  width: 20px;
  height: 21px;
}

.clients {
  flex: 1;
  border: 1px solid #c0c0c0;
  border-top-width: 2px;
}

.clients table {
  width: 100%;
  border-collapse: collapse;
  table-layout: fixed;
}

.clients th {
  height: 33px;
  padding: 0 3px;
  border-bottom: 1px solid #c0c0c0;
  background: #f5f5f5;
  font-weight: 400;
  text-align: left;
}

.clients th + th {
  border-left: 1px solid #c0c0c0;
}

.c-name {
  width: 55%;
}

.c-card {
  width: 27%;
}

.actions {
  display: flex;
  height: 31px;
}

.actions .soft {
  width: 61px;
  border-color: #ccc;
  border-left-color: #f4f4f4;
}

.actions .soft svg {
  width: 20px;
  height: 20px;
}

.actions-rest {
  flex: 1;
  border: 1px solid #c0c0c0;
}

/* schedules */
.workspace {
  display: flex;
  flex: 1;
  gap: 8px;
  min-width: 0;
  padding: 9px 12px 30px 8px;
  background: #efefef;
}

.hall {
  display: grid;
  flex: 1;
  grid-template-columns: minmax(0, 1fr) 20px;
  grid-template-rows: minmax(0, 1fr) 20px;
  min-width: 0;
  border: 1px solid #c8c8c8;
  background: #fff;
}

.hall-view {
  overflow: hidden;
  border-right: 1px solid #c0c0c0;
  border-bottom: 1px solid #c0c0c0;
}

.hall table {
  width: calc(100% + 36px);
  border-collapse: separate;
  border-spacing: 0;
  table-layout: fixed;
}

.w-toggle {
  width: 33px;
}

.w-date {
  width: 90px;
}

.w-cell {
  width: 50px;
}

.hall th {
  height: 33px;
  padding: 2px 1px 0 0;
  border-right: 1px solid #c0c0c0;
  border-bottom: 1px solid #c0c0c0;
  background: #f5f5f5;
  font-weight: 400;
}

.hall tr:first-child th[colspan='5'] {
  height: 34px;
}

.sorted {
  display: flex;
  align-items: center;
  justify-content: space-between;
  padding: 0 10px 0 31px;
}

.sort-mark {
  border: 5px solid transparent;
  border-top: 0;
  border-bottom: 6px solid #777;
}

.hall td {
  padding: 1px 0 0;
  color: #888;
  vertical-align: top;
  white-space: nowrap;
}

.hall .blue {
  background: #d8f0ff;
}

.hall .green {
  background: #dcfce2;
}

.hall .lines-1 {
  height: 20px;
}

.hall .lines-2 {
  height: 40px;
}

.hall .lines-3 {
  height: 60px;
}

.hall .group {
  height: 34px;
}

.hall .fill {
  background: #0080c4;
  color: #fff;
}

.hall .today .fill {
  color: #00f0ff;
}

.hall .toggle {
  padding: 0 0 0 8px;
  color: #555;
  vertical-align: middle;
}

.toggle svg {
  width: 18px;
  height: 18px;
}

.hall .sport {
  padding: 0 0 0 41px;
  vertical-align: middle;
}

.sport svg {
  width: 20px;
  height: 20px;
}

.hall .booked .mark {
  background: #fffeb5;
  color: #000;
}

.hall .late .mark {
  color: #c80000;
}

.scroll {
  display: flex;
  align-items: center;
}

.scroll.vertical {
  flex-direction: column;
}

.track {
  flex: 1;
}

.vertical .track {
  width: 10px;
}

.horizontal .track {
  height: 10px;
}

.thumb {
  background: #b9b9b9;
}

.horizontal .thumb {
  width: 90%;
  height: 100%;
}

.arrow {
  margin: 8px 6px;
  border: 4px solid transparent;
}

.arrow.up {
  border-top: 0;
  border-bottom-color: #999;
}

.arrow.down {
  border-bottom: 0;
  border-top-color: #888;
}

.arrow.left {
  margin: 0 8px;
  border-left: 0;
  border-right-color: #888;
}

.arrow.right {
  margin: 0 8px;
  border-right: 0;
  border-left-color: #888;
}

/* page tabs and status */
.tab-strip {
  height: 57px;
  margin: 0 21px;
  border-top: 2px solid #c4c4c4;
  background: linear-gradient(#c4c4c4, #c4c4c4) 0 2px / 100% 1px no-repeat;
}

.page-tab {
  display: inline-flex;
  align-items: center;
  height: 55px;
  margin-left: 1px;
  padding: 3px 19px 0 16px;
  border: 1px solid #c4c4c4;
  border-width: 0 1px 3px;
  border-bottom-color: #00a2f2;
  background: #fff;
  color: #1096e4;
}

.page-icon {
  width: 32px;
  height: 27px;
  margin-right: 9px;
}

.page-tab button {
  margin-left: 18px;
}

.page-tab button svg {
  width: 14px;
  height: 14px;
}

.status-bar {
  display: flex;
  align-items: center;
  height: 45px;
  padding: 0 22px 18px 27px;
  font-size: 14px;
}

.status {
  display: flex;
  align-items: center;
  padding-right: 20px;
  white-space: nowrap;
}

.status + .status {
  padding-left: 12px;
  border-left: 1px solid #b0b0b0;
}

.status svg {
  width: 20px;
  height: 20px;
  margin-right: 21px;
}

.status.user,
.status.date {
  padding-right: 26px;
}

.status.timer {
  padding: 0 26px 0 35px;
}

.status.time {
  flex: 1;
  border-right: 1px solid #b0b0b0;
}

.day {
  position: relative;
}

.day b {
  position: absolute;
  top: 5px;
  left: 2px;
  font-size: 12px;
  line-height: 14px;
}

.resize {
  width: 14px;
  height: 14px;
  margin-left: 14px;
}
</style>
